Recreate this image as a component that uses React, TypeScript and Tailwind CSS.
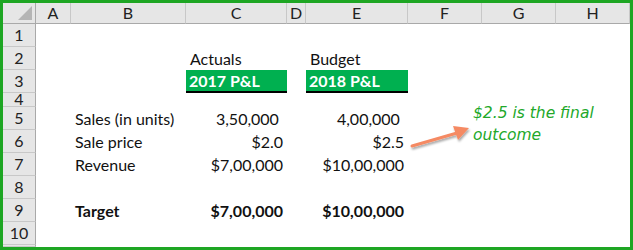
import React from "react";

const COLS = ["A", "B", "C", "D", "E", "F", "G", "H"];

type Cell = { text: string; align?: "left" | "right"; bold?: boolean; band?: boolean };
type Row = { n: string; h: string; cells: Record<number, Cell> };

const ROWS: Row[] = [
  { n: "1", h: "h-[23px]", cells: {} },
  { n: "2", h: "h-[23px]", cells: { 2: { text: "Actuals" }, 4: { text: "Budget" } } },
  {
    n: "3",
    h: "h-[23px]",
    cells: { 2: { text: "2017 P&L", bold: true, band: true }, 4: { text: "2018 P&L", bold: true, band: true } },
  },
  { n: "4", h: "h-[14px]", cells: {} },
  {
    n: "5",
    h: "h-[23px]",
    cells: { 1: { text: "Sales (in units)" }, 2: { text: "3,50,000 ", align: "right" }, 4: { text: "4,00,000 ", align: "right" } },
  },
  {
    n: "6",
    h: "h-[23px]",
    cells: { 1: { text: "Sale price" }, 2: { text: "$2.0", align: "right" }, 4: { text: "$2.5", align: "right" } },
  },
  {
    n: "7",
    h: "h-[23px]",
    cells: { 1: { text: "Revenue" }, 2: { text: "$7,00,000", align: "right" }, 4: { text: "$10,00,000", align: "right" } },
  },
  { n: "8", h: "h-[23px]", cells: {} },
  {
    n: "9",
    h: "h-[23px]",
    cells: {
      1: { text: "Target", bold: true },
      2: { text: "$7,00,000", align: "right", bold: true },
      4: { text: "$10,00,000", align: "right", bold: true },
    },
  },
  { n: "10", h: "h-[23px]", cells: {} },
  { n: "", h: "h-[2px]", cells: {} },
];

const headerBg = "bg-[#e6e6e6] bg-[radial-gradient(#d2d2d2_0.6px,transparent_0.7px)] bg-[length:6px_6px]";

function BodyCell({ cell }: { cell?: Cell }) {
  if (!cell) return <div />;
  if (cell.band) {
    return (
      <div className="flex items-end bg-[#00b050] border-b-2 border-black pl-[3px] pb-[2px] text-white font-bold">
        {cell.text}
      </div>
    );
  }
  return (
    <div
      className={`flex items-end overflow-visible whitespace-pre pb-[3px] text-[#111] ${
        cell.align === "right" ? "justify-end pr-[4px]" : "pl-[4px]"
      } ${cell.bold ? "font-bold" : ""}`}
    >
      {cell.text}
    </div>
  );
}

export default function App() {
  return (
    <div className="relative h-[250px] w-[633px] overflow-hidden border-[3px] border-[#1ea623] bg-white font-['Lato',sans-serif] text-[16px] leading-none">
      <div className="grid grid-cols-[33px_35px_115px_101px_19px_102px_74px_74px_74px]">
        {/* header row */}
        <div className={`relative h-[21px] border-r border-b border-[#a9a9a9] ${headerBg}`}>
          <svg className="absolute right-[3px] bottom-[3px]" width="14" height="14" viewBox="0 0 14 14">
            <polygon points="14,0 14,14 0,14" fill="#b5b5b5" />
          </svg>
        </div>
        {COLS.map((c) => (
          <div
            key={c}
            className={`flex h-[21px] items-center justify-center border-r border-b border-r-[#c8c8c8] border-b-[#a9a9a9] text-[#222] ${headerBg}`}
          >
            {c}
          </div>
        ))}

        {ROWS.map((r, i) => (
          <React.Fragment key={i}>
            <div
              className={`flex ${r.h} justify-center overflow-hidden border-r border-b border-r-[#a9a9a9] border-b-[#c8c8c8] text-[#222] ${headerBg} ${
                r.n === "4" ? "items-start leading-[11px]" : "items-center"
              }`}
            >
              {r.n}
            </div>
            {COLS.map((_, ci) => (
              <BodyCell key={ci} cell={r.cells[ci]} />
            ))}
          </React.Fragment>
        ))}
      </div>

      {/* annotation */}
      <svg className="absolute left-[402px] top-[115px]" width="72" height="36" viewBox="0 0 72 36">
        <defs>
          <filter id="sh" x="-20%" y="-50%" width="140%" height="200%">
            <feDropShadow dx="1" dy="2" stdDeviation="1.2" floodColor="#000" floodOpacity="0.35" />
          </filter>
        </defs>
        <g filter="url(#sh)">
          <line x1="7" y1="28" x2="52" y2="15" stroke="#f58a64" strokeWidth="3" strokeLinecap="round" />
          <polygon points="64,10 48,8 53,22" fill="#f58a64" />
        </g>
      </svg>
      <div className="absolute left-[470px] top-[99px] font-['DejaVu_Sans',sans-serif] text-[15.5px] italic leading-[22px] text-[#22a82a]">
        <div>$2.5 is the final</div>
        <div>outcome</div>
      </div>
    </div>
  );
}
